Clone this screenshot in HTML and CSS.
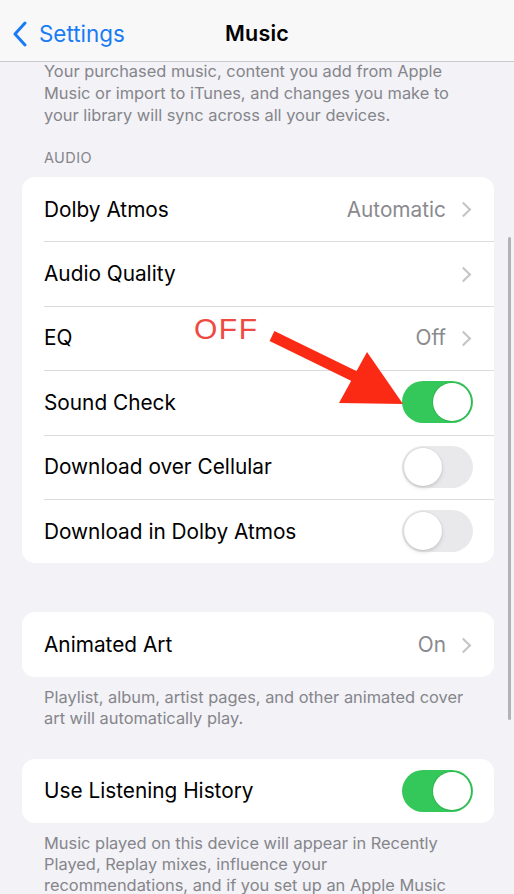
FILE: index.html
```html
<!DOCTYPE html>
<html lang="en">
<head>
<meta charset="utf-8">
<title>Music</title>
<link rel="stylesheet" href="styles.css">
</head>
<body>
<div class="screen">
  <header class="nav">
    <a class="back">
      <svg class="back-chevron" width="16" height="26" viewBox="0 0 16 26"><path d="M13 2 L3 13 L13 24" fill="none" stroke="#1a7cf5" stroke-width="3" stroke-linecap="round" stroke-linejoin="round"/></svg>
      <span>Settings</span>
    </a>
    <h1 class="title">Music</h1>
  </header>

  <main class="content">
    <p class="note note-top">Your purchased music, content you add from Apple Music or import to iTunes, and changes you make to your library will sync across all your devices.</p>

    <h2 class="section-label">AUDIO</h2>
    <section class="group">
      <div class="row"><span class="label">Dolby Atmos</span><span class="value">Automatic</span><span class="chev"></span></div>
      <div class="row"><span class="label">Audio Quality</span><span class="chev"></span></div>
      <div class="row"><span class="label">EQ</span><span class="value">Off</span><span class="chev"></span></div>
      <div class="row"><span class="label">Sound Check</span><span class="switch on"></span></div>
      <div class="row"><span class="label">Download over Cellular</span><span class="switch"></span></div>
      <div class="row"><span class="label">Download in Dolby Atmos</span><span class="switch"></span></div>
    </section>

    <section class="group group-spaced">
      <div class="row"><span class="label">Animated Art</span><span class="value">On</span><span class="chev"></span></div>
    </section>
    <p class="note">Playlist, album, artist pages, and other animated cover art will automatically play.</p>

    <section class="group group-after-note">
      <div class="row"><span class="label">Use Listening History</span><span class="switch on"></span></div>
    </section>
    <p class="note">Music played on this device will appear in Recently Played, Replay mixes, influence your recommendations, and if you set up an Apple Music profile, your followers will see what you listen to.</p>
  </main>

  <div class="scrollbar"></div>

  <div class="callout">
    <span class="callout-text">OFF</span>
    <svg class="callout-arrow" width="514" height="894" viewBox="0 0 514 894">
      <line x1="272" y1="336" x2="358" y2="378" stroke="#fb2a14" stroke-width="11"/>
      <polygon points="367,352 339,403 403,404" fill="#fb2a14"/>
    </svg>
  </div>
</div>
</body>
</html>
```
FILE: styles.css
```css
* { box-sizing: border-box; }

html, body {
  margin: 0;
  padding: 0;
}

body {
  background: #f2f2f7;
  font-family: Inter, "Noto Sans", "Liberation Sans", sans-serif;
  color: #000;
}

.screen {
  position: relative;
  width: 514px;
  height: 894px;
  overflow: hidden;
  background: #f2f2f7;
}

/* navigation bar */
.nav {
  position: relative;
  height: 62px;
  padding-top: 4px;
  background: #f8f8f9;
  border-bottom: 1px solid #c9c9cc;
  display: flex;
  align-items: center;
  justify-content: center;
}

.back {
  position: absolute;
  left: 12px;
  top: 20px;
  display: flex;
  align-items: center;
  gap: 11px;
  color: #1a7cf5;
  font-size: 22.4px;
}

.title {
  margin: 0;
  font-size: 21.5px;
  font-weight: 600;
  letter-spacing: 0.2px;
}

/* scrolling content */
.content {
  display: flex;
  flex-direction: column;
}

.note {
  margin: 10px 0 0;
  padding: 0 40px 0 44px;
  font-size: 16.4px;
  line-height: 21px;
  color: #85858a;
}

.note-top {
  margin-top: -2px;
  line-height: 22px;
}

.section-label {
  margin: 23px 0 0;
  padding-left: 44px;
  font-size: 14.5px;
  line-height: 18px;
  font-weight: 400;
  letter-spacing: 0.4px;
  color: #85858a;
}

.group {
  margin: 10px 20px 0 22px;
  background: #fff;
  border-radius: 13px;
  overflow: hidden;
}

.group-spaced { margin-top: 49px; }
.group-after-note { margin-top: 30px; }

.row {
  position: relative;
  height: 64.4px;
  display: flex;
  align-items: center;
  padding: 0 21px 0 22px;
}

.row + .row::before {
  content: "";
  position: absolute;
  top: 0;
  left: 22px;
  right: 0;
  height: 1px;
  background: #dcdcdf;
}

.label {
  flex: 1;
  font-size: 20.8px;
}

.value {
  font-size: 20.8px;
  color: #8a8a8e;
  margin-right: 15px;
}

.chev {
  width: 9px;
  height: 14px;
  margin-right: 3px;
  position: relative;
}

.chev::before {
  content: "";
  position: absolute;
  left: -3px;
  top: 2px;
  width: 9px;
  height: 9px;
  border-top: 2px solid #c4c4c7;
  border-right: 2px solid #c4c4c7;
  transform: rotate(45deg);
}

/* toggle switch */
.switch {
  position: relative;
  width: 71px;
  height: 42px;
  border-radius: 21px;
  background: #e9e9eb;
}

.switch::after {
  content: "";
  position: absolute;
  top: 2px;
  left: 2px;
  width: 38px;
  height: 38px;
  border-radius: 50%;
  background: #fff;
  box-shadow: 0 2px 4px rgba(0,0,0,0.14), 0 0 0 0.5px rgba(0,0,0,0.06);
}

.switch.on {
  background: #34c759;
}

.switch.on::after {
  left: 31px;
  box-shadow: 0 0 0 1px rgba(40,150,70,0.35);
}

/* scroll indicator */
.scrollbar {
  position: absolute;
  left: 508px;
  top: 237px;
  width: 3px;
  height: 483px;
  border-radius: 2px;
  background: #b3b3b7;
}

/* annotation overlay */
.callout {
  position: absolute;
  inset: 0;
  pointer-events: none;
}

.callout-text {
  position: absolute;
  left: 194px;
  top: 312px;
  font-family: "Liberation Sans", Arial, sans-serif;
  font-size: 30px;
  letter-spacing: 1.5px;
  color: #ef4a42;
}

.callout-arrow {
  position: absolute;
  left: 0;
  top: 0;
}
```
